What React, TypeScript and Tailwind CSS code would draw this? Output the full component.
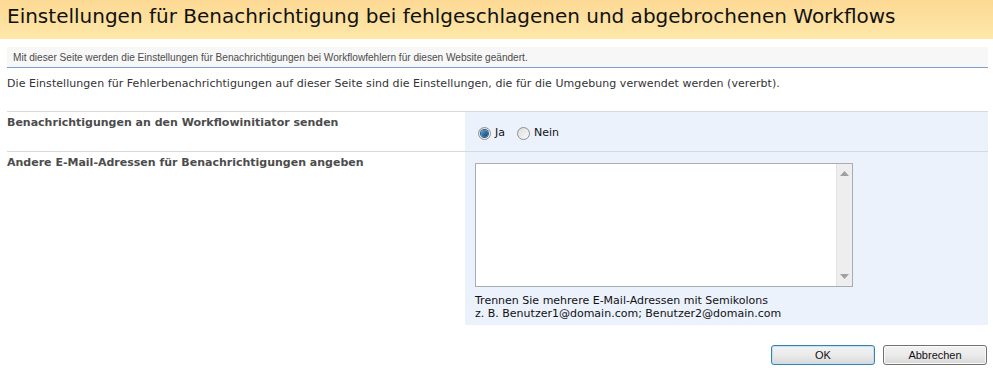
import React from 'react';

const Radio: React.FC<{ checked?: boolean }> = ({ checked }) => (
  <span className="relative inline-flex h-[13px] w-[13px] items-center justify-center rounded-full border border-[#8e8f8f] bg-gradient-to-br from-[#dcdcdc] to-[#fbfbfb]">
    {checked && (
      <span className="h-[7px] w-[7px] rounded-full bg-gradient-to-br from-[#5da3d6] to-[#0a3f6e] ring-1 ring-[#2a5d8a]" />
    )}
  </span>
);

const App: React.FC = () => {
  return (
    <div className="w-[993px] h-[372px] bg-white font-['DejaVu_Sans',sans-serif] text-[#333]">
      {/* Title */}
      <div className="h-[39px] bg-gradient-to-b from-[#fcd994] to-[#fee8a9] pl-[7px] pt-[4px]">
        <h1 className="text-[20px] leading-[24px] text-[#111]">
          Einstellungen für Benachrichtigung bei fehlgeschlagenen und abgebrochenen Workflows
        </h1>
      </div>

      <div className="pl-[7px] pr-[5px]">
        {/* Description bar */}
        <div className="mt-[8px] h-[21px] bg-[#f7f7f7] border-b border-[#7ca0d4] pl-[6px] pt-[4px] font-['Liberation_Sans',sans-serif] text-[10.1px] leading-[13px] text-[#4c4c4c]">
          Mit dieser Seite werden die Einstellungen für Benachrichtigungen bei Workflowfehlern für diesen Website geändert.
        </div>

        <p className="mt-[9px] text-[11px] leading-[14px] tracking-[0.05px]">
          Die Einstellungen für Fehlerbenachrichtigungen auf dieser Seite sind die Einstellungen, die für die Umgebung verwendet werden (vererbt).
        </p>

        {/* Section 1 */}
        <div className="mt-[20px] flex h-[40px] border-t border-[#d8d8d8]">
          <div className="w-[458px] pt-[4px] text-[11px] leading-[14px] font-bold text-[#4c4c4c]">
            Benachrichtigungen an den Workflowinitiator senden
          </div>
          <div className="flex flex-1 items-start bg-[#ebf2fc] pl-[13px] pt-[14px] text-[11px] leading-[14px] text-[#111]">
            <label className="flex items-center gap-[4px]">
              <Radio checked />
              <span>Ja</span>
            </label>
            <label className="ml-[12px] flex items-center gap-[4px]">
              <Radio />
              <span>Nein</span>
            </label>
          </div>
        </div>

        {/* Section 2 */}
        <div className="flex h-[174px] border-t border-[#d8d8d8]">
          <div className="w-[458px] pt-[4px] text-[11px] leading-[14px] font-bold text-[#4c4c4c]">
            Andere E-Mail-Adressen für Benachrichtigungen angeben
          </div>
          <div className="flex-1 bg-[#ebf2fc] pl-[10px] pt-[11px]">
            <div className="flex h-[124px] w-[378px] border border-[#a5acb5] border-t-[#abadb3] bg-white">
              <div className="flex-1" />
              <div className="flex w-[16px] flex-col items-center justify-between border-l border-[#e3e3e3] bg-[#eeeeee] py-[7px]">
                <svg width="9" height="5" viewBox="0 0 9 5">
                  <path d="M4.5 0 L9 5 L0 5 Z" fill="#a0a0a0" />
                </svg>
                <svg width="9" height="5" viewBox="0 0 9 5">
                  <path d="M0 0 L9 0 L4.5 5 Z" fill="#a0a0a0" />
                </svg>
              </div>
            </div>
            <div className="mt-[7px] text-[11px] leading-[13px] text-[#111]">
              <div>Trennen Sie mehrere E-Mail-Adressen mit Semikolons</div>
              <div>z. B. Benutzer1@domain.com; Benutzer2@domain.com</div>
            </div>
          </div>
        </div>

        {/* Buttons */}
        <div className="mt-[20px] flex justify-end gap-[8px] pr-[1px] font-['Liberation_Sans',sans-serif] text-[11px] text-[#111]">
          <button className="h-[20px] w-[104px] rounded-[3px] border border-[#3c7fb1] bg-gradient-to-b from-[#f2f2f2] via-[#ebebeb] to-[#d8d8d8] shadow-[inset_0_0_0_1px_#bde3f5]">
            OK
          </button>
          <button className="h-[20px] w-[104px] rounded-[3px] border border-[#707070] bg-gradient-to-b from-[#f2f2f2] via-[#ebebeb] to-[#d8d8d8] shadow-[inset_0_0_0_1px_#fbfbfb]">
            Abbrechen
          </button>
        </div>
      </div>
    </div>
  );
};

export default App;
